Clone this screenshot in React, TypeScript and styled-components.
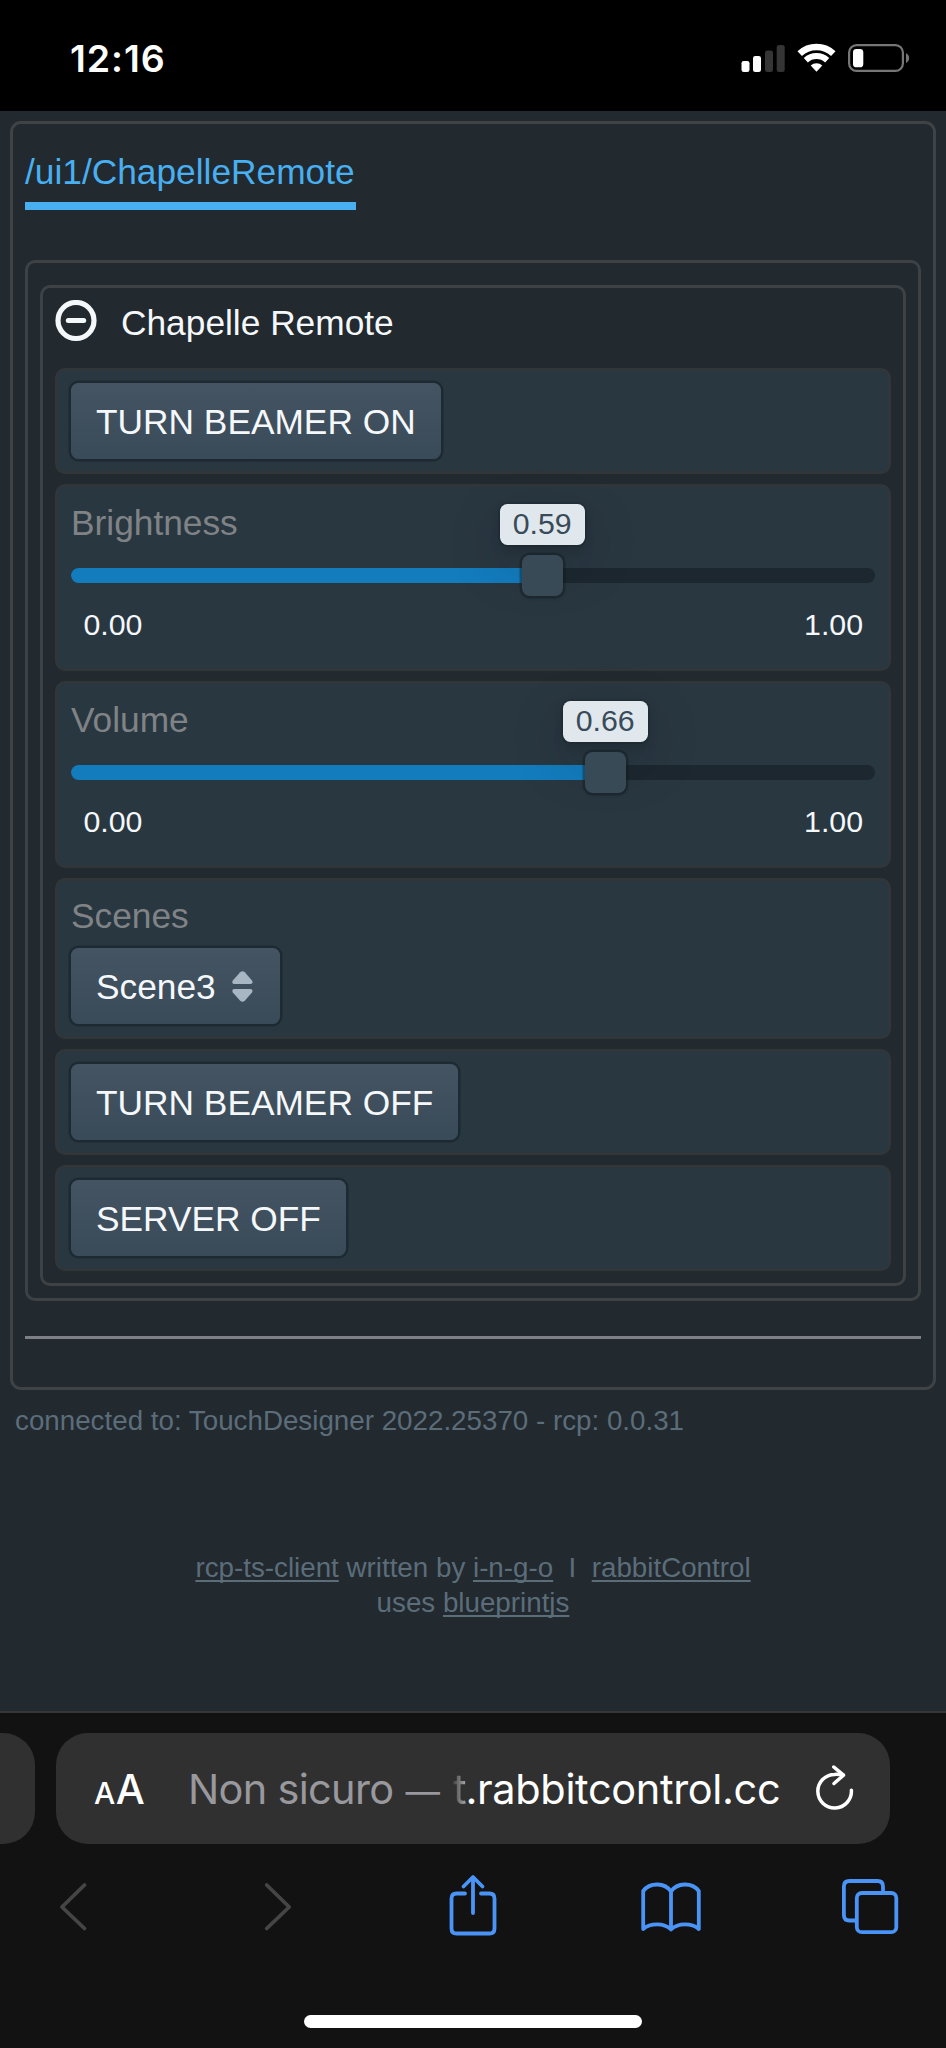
import React from 'react';
import styled, { createGlobalStyle } from 'styled-components';

const GlobalStyle = createGlobalStyle`
  *, *::before, *::after { box-sizing: border-box; }
  body {
    margin: 0;
    background: #121212;
    font-family: "Liberation Sans", Arial, sans-serif;
    -webkit-font-smoothing: antialiased;
  }
`;

const Phone = styled.div`
  display: flex;
  flex-direction: column;
  width: 946px;
  height: 2048px;
  overflow: hidden;
`;

const StatusBar = styled.header`
  display: flex;
  flex: none;
  align-items: center;
  justify-content: space-between;
  height: 111px;
  padding: 6px 35px 0 70px;
  background: #000;
`;

const Clock = styled.span`
  font: 600 37.5px/44px Inter, sans-serif;
  letter-spacing: 0.9px;
  color: #fff;
`;

const StatusIcons = styled.svg`
  display: block;
  width: 171px;
  height: 30px;
  margin-top: -1px;
`;

const Page = styled.main`
  display: flex;
  flex: none;
  flex-direction: column;
  height: 1602px;
  padding: 10px 10px 0;
  background: #22292f;
  border-bottom: 2px solid #343638;
`;

const RootPanel = styled.section`
  height: 1269px;
  padding: 30px 12px 0;
  border: 3px solid #3f4346;
  border-radius: 11px;
`;

const Tab = styled.div`
  width: fit-content;
  height: 56px;
  padding-right: 1px;
  border-bottom: 8px solid #48aff0;
  font-size: 35.3px;
  line-height: 36px;
  color: #48aff0;
`;

const GroupPanel = styled.div`
  margin-top: 50px;
  padding: 22px 12px 12px;
  border: 3px solid #3e4245;
  border-radius: 10px;
`;

const Group = styled.div`
  padding: 10px 12px 12px;
  border: 3px solid #3e4244;
  border-radius: 10px;
`;

const GroupHeader = styled.div`
  display: flex;
  align-items: flex-start;
  gap: 24px;
  height: 70px;
  color: #f5f8fa;
`;

const MinusIcon = styled.svg`
  display: block;
  width: 42px;
  height: 42px;
  margin-top: 2px;
`;

const GroupTitle = styled.span`
  margin-top: 7px;
  font-size: 35.3px;
  line-height: 36px;
`;

const CardList = styled.div`
  display: flex;
  flex-direction: column;
  gap: 10px;
`;

const Card = styled.div<{ $height: number }>`
  height: ${(p) => p.$height}px;
  padding: 12px 13px;
  border: 3px solid #30363a;
  border-radius: 10px;
  background: #293741;
`;

const Button = styled.button<{ $endPadding?: number }>`
  display: flex;
  align-items: center;
  gap: 16.5px;
  height: 76px;
  padding: 1px ${(p) => p.$endPadding ?? 25}px 0 25px;
  border: 0;
  border-radius: 7.5px;
  background: linear-gradient(to bottom, #445462, #394a58);
  box-shadow: 0 0 0 2.5px rgba(16, 22, 26, 0.4);
  font: 35.3px/40px "Liberation Sans", Arial, sans-serif;
  white-space: nowrap;
  color: #f5f8fa;
`;

const CaretIcon = styled.svg`
  display: block;
  width: 21px;
  height: 31px;
`;

const Label = styled.div<{ $top: number; $gap: number }>`
  margin: ${(p) => p.$top}px 0 ${(p) => p.$gap}px;
  font-size: 35.3px;
  line-height: 36px;
  color: #808386;
`;

const Track = styled.div`
  position: relative;
  height: 15px;
  border-radius: 7.5px;
  background: #1c272f;
`;

const Progress = styled.div`
  height: 15px;
  border-radius: 7.5px 0 0 7.5px;
  background: #137cbd;
`;

const Handle = styled.div`
  position: absolute;
  top: -13px;
  width: 41px;
  height: 41px;
  margin-left: -20px;
  border-radius: 8px;
  background: #394a57;
  box-shadow: 0 0 0 2.5px rgba(16, 22, 26, 0.35), 0 2px 4px rgba(16, 22, 26, 0.2);
`;

const ValueTip = styled.div`
  position: absolute;
  top: -64px;
  width: 85px;
  height: 41px;
  margin-left: -42px;
  border-radius: 7.5px;
  background: #e1e8ed;
  box-shadow: 0 0 0 2px rgba(16, 22, 26, 0.15), 0 5px 10px rgba(16, 22, 26, 0.2),
    0 18px 55px rgba(16, 22, 26, 0.2);
  font-size: 30.3px;
  line-height: 40px;
  text-align: center;
  color: #394b59;
`;

const RangeLabels = styled.div`
  display: flex;
  justify-content: space-between;
  margin: 25px 12px 0 12.5px;
  font-size: 30.3px;
  line-height: 34px;
  color: #f5f8fa;
`;

const Divider = styled.hr`
  height: 3px;
  margin: 35px 0 0;
  border: 0;
  background: #7d8187;
`;

const Connection = styled.div`
  margin: 15px 0 0 5px;
  font-size: 27.75px;
  line-height: 32px;
  color: #5c6d7a;
`;

const Footer = styled.footer`
  margin-top: 113px;
  font-size: 27.75px;
  line-height: 35.4px;
  text-align: center;
  color: #5c6d7a;
`;

const FooterLink = styled.a`
  text-decoration: underline;
  text-decoration-thickness: 2px;
  text-underline-offset: 3px;
  text-decoration-skip-ink: none;
`;

const BrowserBar = styled.footer`
  display: flex;
  flex: 1;
  flex-direction: column;
  align-items: center;
  padding-top: 20px;
  background: #121212;
`;

const AddressRow = styled.div`
  display: flex;
  gap: 21px;
  width: 946px;
  height: 111px;
`;

const PreviousTab = styled.div`
  width: 35px;
  border-radius: 0 32px 32px 0;
  background: #303030;
`;

const AddressField = styled.div`
  display: flex;
  align-items: center;
  width: 834px;
  padding: 0 36px 0 38px;
  border-radius: 32px;
  background: #303030;
  font-family: Inter, sans-serif;
  color: #fff;
`;

const TextSize = styled.span`
  display: flex;
  align-items: baseline;
  gap: 0.5px;
  width: 94px;
  padding-top: 4px;
  line-height: 50px;
`;

const Glyph = styled.span<{ $size: number }>`
  font-size: ${(p) => p.$size}px;
  font-weight: 500;
`;

const Address = styled.span`
  display: flex;
  flex: 1;
  align-items: baseline;
  padding-top: 4px;
  font-size: 41.5px;
  line-height: 50px;
  white-space: pre;
`;

const Warning = styled.span`
  width: 217.5px;
  letter-spacing: -0.7px;
  color: #98989d;
`;

const Dash = styled.span`
  width: 47.5px;
  font-size: 34.5px;
  color: #98989d;
`;

const FadedLetter = styled.span`
  width: 12.5px;
  background: linear-gradient(to right, #444, #aaa);
  background-clip: text;
  color: transparent;
`;

const Domain = styled.span`
  letter-spacing: -0.36px;
`;

const ReloadIcon = styled.svg`
  display: block;
  width: 40px;
  height: 48px;
  margin-top: -4px;
`;

const Toolbar = styled.nav`
  display: flex;
  justify-content: space-between;
  width: 100%;
  margin-top: 30px;
  padding: 0 44px 0 43.5px;
`;

const ToolIcon = styled.svg<{ $muted?: boolean }>`
  display: block;
  width: 64px;
  height: 64px;
  fill: none;
  stroke: ${(p) => (p.$muted ? '#454545' : '#4a93f7')};
  stroke-width: 3.8px;
  stroke-linecap: round;
  stroke-linejoin: round;
`;

const HomeIndicator = styled.div`
  width: 338px;
  height: 13px;
  margin-top: 77px;
  border-radius: 6.5px;
  background: #fff;
`;

function SliderCard({ label, value, fraction }: { label: string; value: string; fraction: number }) {
  // The handle travels the track's length less its own width.
  const position = `calc(20.5px + (100% - 41px) * ${fraction})`;
  return (
    <Card $height={187}>
      <Label $top={6} $gap={27}>{label}</Label>
      <Track>
        <Progress style={{ width: position }} />
        <ValueTip style={{ left: position }}>{value}</ValueTip>
        <Handle style={{ left: position }} />
      </Track>
      <RangeLabels>
        <span>0.00</span>
        <span>1.00</span>
      </RangeLabels>
    </Card>
  );
}

export default function App() {
  return (
    <Phone>
      <GlobalStyle />
      <StatusBar>
        <Clock>12:16</Clock>
        <StatusIcons viewBox="0 0 171 30">
          <g fill="#fff">
            <rect x="1.5" y="18" width="8" height="11" rx="2.3" />
            <rect x="13" y="13" width="8" height="16" rx="2.3" />
            <rect x="25" y="7.5" width="8" height="21.5" rx="2.3" fill="#353535" />
            <rect x="36.7" y="2" width="8" height="27" rx="2.3" fill="#353535" />
            <path d="M76.5 28.7 70.7 22.5A8.5 8.5 0 0 1 82.3 22.5Z" />
          </g>
          <g fill="none" stroke="#fff">
            <path d="M65.8 17.2A15.7 15.7 0 0 1 87.2 17.2" strokeWidth="6" />
            <path d="M59.7 10.6A24.7 24.7 0 0 1 93.3 10.6" strokeWidth="6.6" />
          </g>
          <rect x="109.1" y="2.1" width="53.8" height="25.8" rx="7.5" fill="none" stroke="#767676" strokeWidth="2.2" />
          <rect x="113" y="6" width="10.3" height="18.3" rx="3.4" fill="#fff" />
          <path d="M166 10.2A5.4 5.4 0 0 1 166 20Z" fill="#767676" />
        </StatusIcons>
      </StatusBar>

      <Page>
        <RootPanel>
          <Tab>/ui1/ChapelleRemote</Tab>
          <GroupPanel>
            <Group>
              <GroupHeader>
                <MinusIcon viewBox="0 0 42 42">
                  <circle cx="21" cy="20.5" r="18" fill="none" stroke="#f5f8fa" strokeWidth="5.2" />
                  <rect x="10.8" y="18" width="20.4" height="5" rx="2.5" fill="#f5f8fa" />
                </MinusIcon>
                <GroupTitle>Chapelle Remote</GroupTitle>
              </GroupHeader>
              <CardList>
                <Card $height={106}>
                  <Button>TURN BEAMER ON</Button>
                </Card>
                <SliderCard label="Brightness" value="0.59" fraction={0.59} />
                <SliderCard label="Volume" value="0.66" fraction={0.6725} />
                <Card $height={161}>
                  <Label $top={5} $gap={14}>Scenes</Label>
                  <Button $endPadding={27}>
                    Scene3
                    <CaretIcon viewBox="0 0 21 31" fill="#a7b6c2">
                      <path d="M2 13H18.500Q21.500 12.500 20 9.500L12.800 1.300Q10.500-.8 8.200 1.300L.8 9.500Q-.5 12.500 2 13Z" />
                      <path d="M2 18H18.500Q21.500 18.500 20 21.500L12.800 29.700Q10.500 31.800 8.200 29.700L.8 21.500Q-.5 18.500 2 18Z" />
                    </CaretIcon>
                  </Button>
                </Card>
                <Card $height={106}>
                  <Button>TURN BEAMER OFF</Button>
                </Card>
                <Card $height={106}>
                  <Button>SERVER OFF</Button>
                </Card>
              </CardList>
            </Group>
          </GroupPanel>
          <Divider />
        </RootPanel>
        <Connection>connected to: TouchDesigner 2022.25370 - rcp: 0.0.31</Connection>
        <Footer>
          <FooterLink>rcp-ts-client</FooterLink> written by <FooterLink>i-n-g-o</FooterLink>
          {' \u00a0I\u00a0 '}
          <FooterLink>rabbitControl</FooterLink>
          <br />
          uses <FooterLink>blueprintjs</FooterLink>
        </Footer>
      </Page>

      <BrowserBar>
        <AddressRow>
          <PreviousTab />
          <AddressField>
            <TextSize>
              <Glyph $size={30}>A</Glyph>
              <Glyph $size={41}>A</Glyph>
            </TextSize>
            <Address>
              <Warning>Non sicuro</Warning>
              <Dash>—</Dash>
              <FadedLetter>t</FadedLetter>
              <Domain>.rabbitcontrol.cc</Domain>
            </Address>
            <ReloadIcon viewBox="0 0 40 48" fill="none" stroke="#fff" strokeWidth="3.5" strokeLinecap="round" strokeLinejoin="round">
              <path d="M37.4 27.2A16.8 16.8 0 1 1 20.6 11.400Q24.500 11.200 29 12" />
              <path d="M19.8 4 29.500 12.200 20 20.500" />
            </ReloadIcon>
          </AddressField>
        </AddressRow>
        <Toolbar>
          <ToolIcon $muted viewBox="0 0 64 64">
            <path d="M40.500 11 18 33 40.500 54.500" />
          </ToolIcon>
          <ToolIcon $muted viewBox="0 0 64 64">
            <path d="M24.700 11 47.200 33 24.700 54.500" />
          </ToolIcon>
          <ToolIcon viewBox="0 0 64 64">
            <path d="M24 19.500H15.500Q10.500 19.500 10.500 24.500V54.500Q10.500 59.500 15.500 59.500H48.500Q53.500 59.500 53.500 54.500V24.500Q53.500 19.500 48.500 19.500H40" />
            <path d="M32 39V4M22.500 12.500 32 3 41.500 12.500" />
          </ToolIcon>
          <ToolIcon viewBox="0 0 64 64">
            <path d="M32 17.500C26 8.500 11 8 4.200 17V55C11 49 25 48.500 32 55.500C39 48.500 53 49 59.800 55V17C53 8 38 8.500 32 17.500V55" />
          </ToolIcon>
          <ToolIcon viewBox="0 0 64 64">
            <rect x="18.800" y="19" width="39.500" height="39.200" rx="5" />
            <path d="M18 46.500H11.400Q5.900 46.500 5.900 41V12.500Q5.900 7 11.400 7H39.500Q45 7 45 12.500V18" />
          </ToolIcon>
        </Toolbar>
        <HomeIndicator />
      </BrowserBar>
    </Phone>
  );
}
